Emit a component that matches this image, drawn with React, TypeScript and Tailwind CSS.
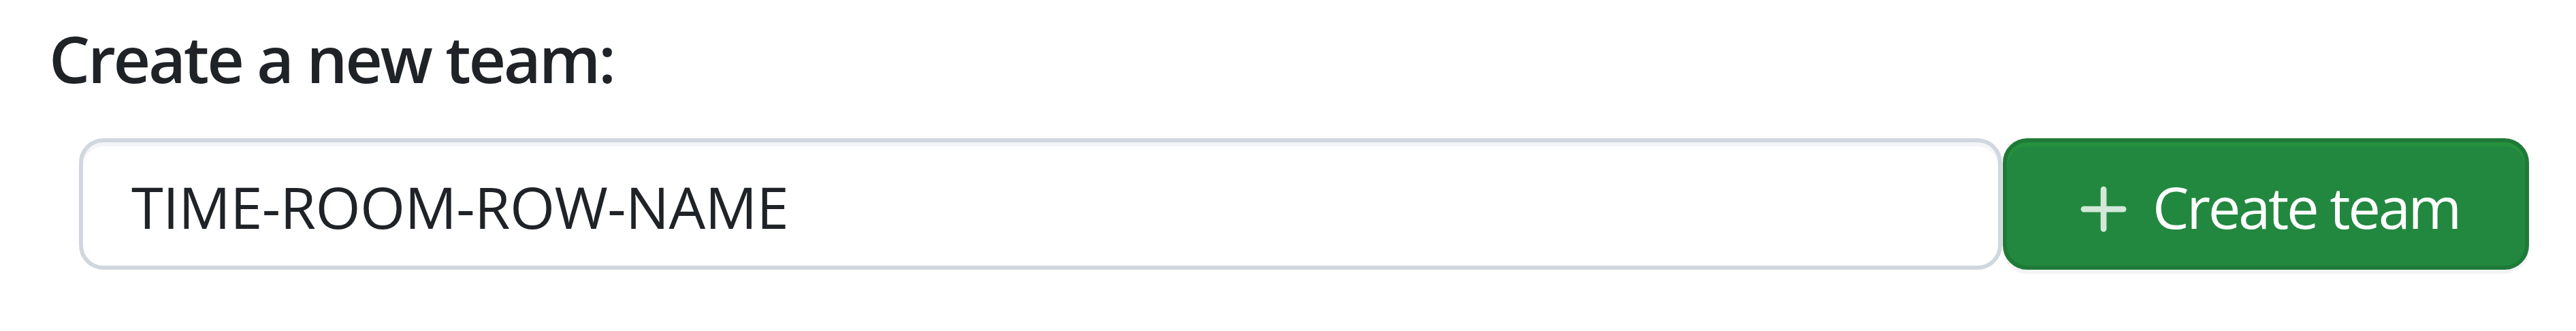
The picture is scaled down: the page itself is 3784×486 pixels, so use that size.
import React from 'react';

// Octicon-style plus, drawn in a 16x16 box
const PlusIcon = () => (
  <svg width="93" height="93" viewBox="0 0 16 16" className="shrink-0 mt-[17px]" fill="#d3e8d9">
    <path d="M7.75 2a.75.75 0 0 1 .75.75V7h4.25a.75.75 0 0 1 0 1.5H8.5v4.25a.75.75 0 0 1-1.5 0V8.5H2.75a.75.75 0 0 1 0-1.5H7V2.75A.75.75 0 0 1 7.75 2Z" />
  </svg>
);

export default function App() {
  const [teamName, setTeamName] = React.useState('');

  return (
    <div className="w-[3784px] h-[486px] bg-white font-['Open_Sans',sans-serif] text-[#1f2328]">
      <div className="pl-[72px] pt-[38px] h-[203px]">
        <h2 className="text-[95px] leading-[95px] font-semibold whitespace-nowrap tracking-[-3.3px]">
          Create a new team:
        </h2>
      </div>

      <div className="flex items-stretch gap-[1px] pl-[116px] h-[193px]">
        <label className="relative w-[2825px] h-full border-[6px] border-[#d0d7de] rounded-[36px] bg-white shadow-[inset_0_6px_0_#f4f5f7] flex items-center pl-[71px] pt-[7px] overflow-hidden">
          <input
            value={teamName}
            onChange={(e) => setTeamName(e.target.value)}
            className="absolute inset-0 opacity-0"
          />
          <span className="whitespace-nowrap text-[85px] leading-none tracking-[-0.6px]">
            {teamName || 'TIME-ROOM-ROW-NAME'}
          </span>
        </label>

        <button className="w-[773px] h-full border-[6px] border-[#1f7a38] rounded-[36px] bg-[#22883f] shadow-[inset_0_6px_0_#26913f,0_6px_0_#f3f4f6] flex items-center pl-[97px] text-white">
          <PlusIcon />
          <span className="whitespace-nowrap text-[85px] leading-none pt-[7px] ml-[24px] tracking-[-3.3px]">
            Create team
          </span>
        </button>
      </div>
    </div>
  );
}
